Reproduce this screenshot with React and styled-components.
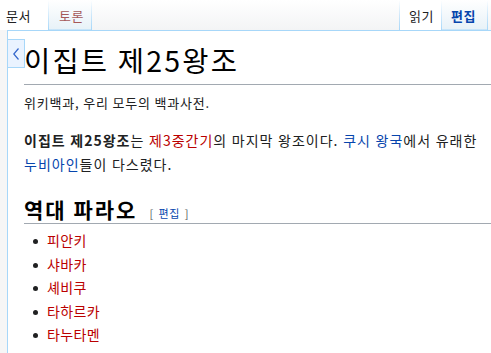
import React from 'react';
import styled, { createGlobalStyle } from 'styled-components';

const GlobalStyle = createGlobalStyle`
  html, body {
    margin: 0;
    padding: 0;
    background: #f6f6f6;
    font-family: "Noto Sans CJK KR", "Noto Sans", sans-serif;
    color: #202122;
  }
`;

const Page = styled.div`
  width: 491px;
  height: 353px;
  overflow: hidden;
  display: flex;
  flex-direction: column;
`;

const Header = styled.div`
  display: flex;
  height: 30px;
  background: linear-gradient(to bottom, #ffffff 0%, #f3f4f5 100%);
`;

const TabGroup = styled.div`
  display: flex;
`;

const Spacer = styled.div`
  flex: 1;
`;

const Tab = styled.a`
  position: relative;
  display: flex;
  align-items: center;
  height: 30px;
  box-sizing: border-box;
  width: ${(p) => p.w}px;
  padding-left: ${(p) => p.pl}px;
  font-size: 13px;
  letter-spacing: 0.6px;
  font-weight: ${(p) => (p.bold ? 700 : 400)};
  color: ${(p) => p.color || '#202122'};
  text-decoration: none;
  background: ${(p) => (p.selected
    ? '#ffffff'
    : 'linear-gradient(to top, #a7d7f9 0, #e8f2f8 1px, #ffffff 100%)')};
  &::after {
    content: "";
    position: absolute;
    right: 0;
    top: 0;
    bottom: 0;
    width: 1px;
    background: linear-gradient(to bottom, rgba(167, 215, 249, 0) 0, #a7d7f9 100%);
  }
`;

const LeadSep = styled.div`
  width: 1px;
  background: linear-gradient(to bottom, rgba(167, 215, 249, 0) 0, #a7d7f9 100%);
`;

const Body = styled.div`
  position: relative;
  flex: 1;
  display: flex;
  padding-left: 7px;
`;

const Content = styled.main`
  flex: 1;
  background: #fff;
  border-top: 1px solid #a7d7f9;
  border-left: 1px solid #a7d7f9;
  padding-left: 16px;
`;

const Collapse = styled.button`
  position: absolute;
  left: 7px;
  top: 9px;
  width: 18px;
  height: 29px;
  padding: 0;
  border: 1px solid #a7d7f9;
  background: #eaf3ff;
  display: flex;
  align-items: center;
  justify-content: center;
`;

const Title = styled.h1`
  margin: 0;
  padding: 10px 0 6px;
  font-size: 28.5px;
  line-height: 37px;
  letter-spacing: 2.2px;
  font-weight: 400;
  color: #000;
  border-bottom: 1px solid #a2a9b1;
`;

const SiteSub = styled.div`
  margin-top: 9px;
  font-size: 13px;
  line-height: 18px;
  letter-spacing: 0.8px;
  color: #202122;
`;

const Para = styled.p`
  margin: 16px 0 0;
  font-size: 14px;
  line-height: 24px;
  letter-spacing: 1px;
  word-spacing: 0.5px;
`;

const Link = styled.a`
  color: ${(p) => (p.missing ? '#ba0000' : '#0645ad')};
  text-decoration: none;
`;

const Heading = styled.h2`
  margin: 20px 0 0;
  padding-bottom: 1px;
  font-size: 21px;
  line-height: 26px;
  letter-spacing: 2px;
  font-weight: 700;
  color: #000;
  border-bottom: 1px solid #a2a9b1;
`;

const EditSection = styled.span`
  margin-left: 12px;
  font-size: 11px;
  line-height: 1;
  letter-spacing: 0.5px;
  font-weight: 400;
  color: #54595d;
  word-spacing: 2px;
`;

const List = styled.ul`
  margin: 5px 0 0;
  padding: 0 0 0 9px;
  list-style: none;
  font-size: 14px;
  line-height: 23.5px;
  letter-spacing: 0.4px;
`;

const Item = styled.li`
  display: flex;
  align-items: center;
  &::before {
    content: "";
    width: 5px;
    height: 5px;
    border-radius: 50%;
    background: #202122;
    margin-right: 9px;
    margin-top: 2px;
  }
`;

const pharaohs = ['피안키', '샤바카', '셰비쿠', '타하르카', '타누타멘'];

export default function App() {
  return (
    <Page>
      <GlobalStyle />
      <Header>
        <TabGroup>
          <Tab selected w={49} pl={6}>문서</Tab>
          <Tab w={43} pl={10} color="#a55858">토론</Tab>
        </TabGroup>
        <Spacer />
        <TabGroup>
          <LeadSep />
          <Tab selected w={42} pl={9}>읽기</Tab>
          <Tab w={46} pl={9} bold color="#0645ad">편집</Tab>
        </TabGroup>
        <div style={{ width: 3 }} />
      </Header>
      <Body>
        <Collapse aria-label="collapse">
          <svg width="8" height="14" viewBox="0 0 8 14">
            <path d="M6.5 1.5 L1.8 7 L6.5 12.5" fill="none" stroke="#36c" strokeWidth="1.2" />
          </svg>
        </Collapse>
        <Content>
          <Title>이집트 제25왕조</Title>
          <SiteSub>위키백과, 우리 모두의 백과사전.</SiteSub>
          <Para>
            <b>이집트 제25왕조</b>는 <Link missing>제3중간기</Link>의 마지막 왕조이다.{' '}
            <Link>쿠시 왕국</Link>에서 유래한 <Link>누비아인</Link>들이 다스렸다.
          </Para>
          <Heading>
            역대 파라오
            <EditSection>
              [ <Link>편집</Link> ]
            </EditSection>
          </Heading>
          <List>
            {pharaohs.map((name) => (
              <Item key={name}>
                <Link missing>{name}</Link>
              </Item>
            ))}
          </List>
        </Content>
      </Body>
    </Page>
  );
}
